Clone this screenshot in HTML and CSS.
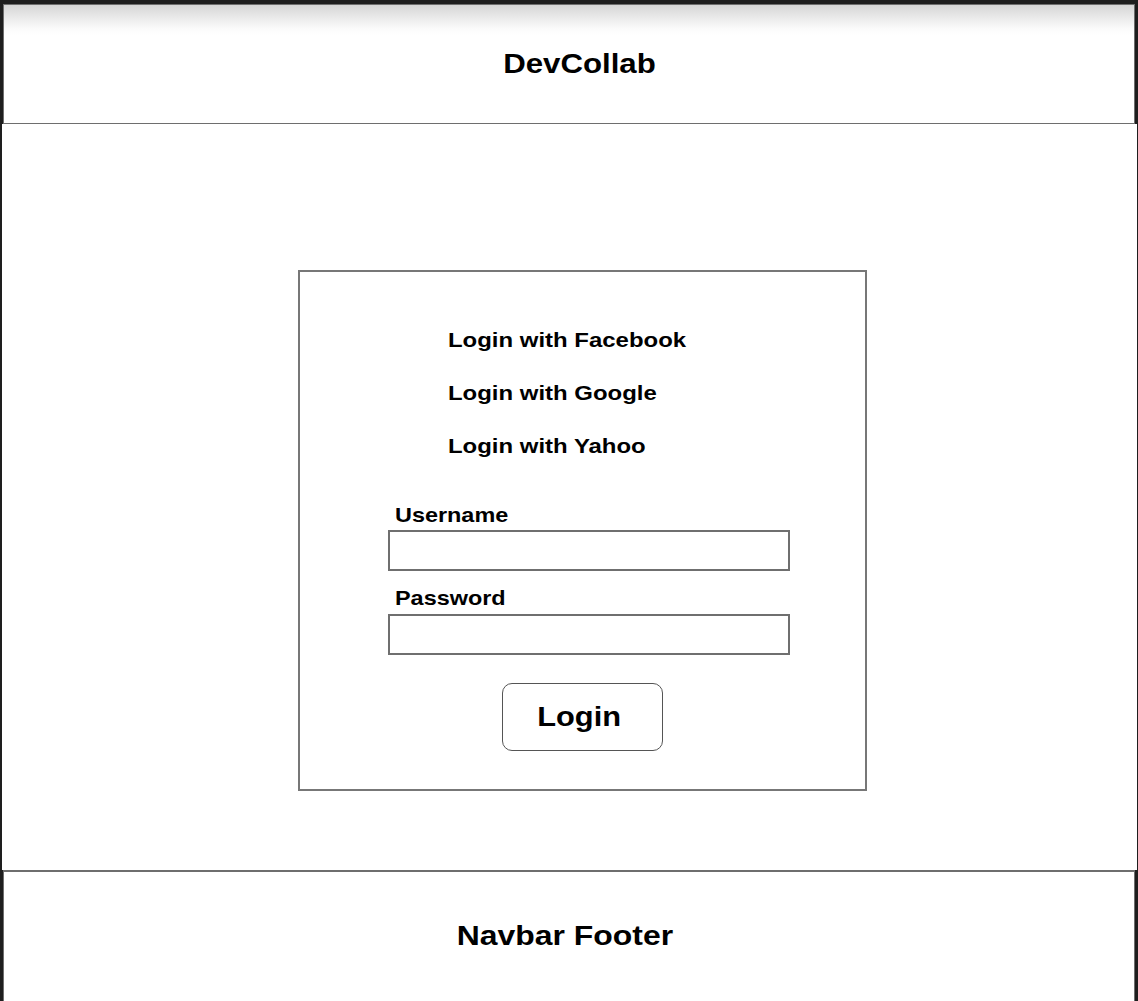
FILE: index.html
```html
<!DOCTYPE html>
<html lang="en">
<head>
<meta charset="utf-8">
<title>DevCollab</title>
<link rel="stylesheet" href="styles.css">
</head>
<body>
  <header class="topbar">
    <h1 class="brand"><span class="wide wide-c">DevCollab</span></h1>
  </header>
  <main class="main">
    <section class="login-box">
      <ul class="social">
        <li><span class="wide wide-l wide-x">Login with Facebook</span></li>
        <li><span class="wide wide-l wide-x">Login with Google</span></li>
        <li><span class="wide wide-l wide-x">Login with Yahoo</span></li>
      </ul>
      <form class="form">
        <label class="label" for="user"><span class="wide wide-l">Username</span></label>
        <input class="field" id="user" type="text">
        <label class="label label-pass" for="pass"><span class="wide wide-l">Password</span></label>
        <input class="field" id="pass" type="password">
        <button class="btn" type="button"><span class="wide wide-c btn-text">Login</span></button>
      </form>
    </section>
  </main>
  <footer class="footer">
    <p class="footer-title"><span class="wide wide-c wide-x">Navbar Footer</span></p>
  </footer>
</body>
</html>
```

FILE: styles.css
```css
html, body {
  margin: 0;
  padding: 0;
}
body {
  background: #1e1e1e;
  font-family: "Liberation Sans", Arial, sans-serif;
  color: #000;
  overflow: hidden;
}
.wide {
  display: inline-block;
  transform: scaleX(1.115);
}
.wide-x {
  transform: scaleX(1.14);
}
.wide-l {
  transform-origin: left center;
}
.wide-c {
  transform-origin: center center;
}
.topbar {
  margin: 4px 3px 0 3px;
  height: 120px;
  box-sizing: border-box;
  border: 1px solid #6e6e6e;
  background: linear-gradient(#d6d6d6 0, #ececec 14px, #fbfbfb 24px, #ffffff 30px);
  display: flex;
  align-items: center;
  justify-content: center;
  padding-left: 21px;
}
.brand {
  margin: 0;
  font-size: 28px;
  line-height: 32px;
  font-weight: 700;
}
.main {
  margin: 0 1px 0 2px;
  height: 746px;
  background: #fff;
  padding-top: 146px;
  box-sizing: border-box;
}
.login-box {
  margin-left: 296px;
  width: 569px;
  height: 521px;
  box-sizing: border-box;
  border: 2px solid #777;
  padding: 56px 0 0 0;
}
.social {
  list-style: none;
  margin: 0;
  padding: 0 0 0 148px;
  display: flex;
  flex-direction: column;
  gap: 29px;
}
.social li {
  font-size: 21px;
  line-height: 24px;
  font-weight: 700;
}
.form {
  margin-top: 45px;
  display: flex;
  flex-direction: column;
  align-items: flex-start;
}
.label {
  font-size: 21px;
  line-height: 24px;
  font-weight: 700;
  margin-left: 95px;
}
.label-pass {
  margin-top: 15px;
}
.field {
  margin: 3px 0 0 88px;
  width: 402px;
  height: 41px;
  box-sizing: border-box;
  border: 2px solid #6f6f6f;
  background: #fff;
  padding: 0;
  outline: none;
}
.label-pass + .field {
  margin-top: 4px;
}
.btn {
  margin: 28px 0 0 202px;
  width: 161px;
  height: 68px;
  box-sizing: border-box;
  border: 1.5px solid #555;
  border-radius: 10px;
  background: #fff;
  font-family: "Liberation Sans", Arial, sans-serif;
  font-size: 28px;
  font-weight: 700;
  color: #000;
  padding: 0 6px 0 0;
  cursor: pointer;
}
.btn-text {
  transform: scaleX(1.1);
}
.footer {
  margin: 0 3px;
  height: 140px;
  box-sizing: border-box;
  border: 1px solid #6e6e6e;
  border-top-width: 2px;
  background: #fff;
  padding-top: 48px;
  padding-right: 9px;
  text-align: center;
}
.footer-title {
  margin: 0;
  font-size: 28px;
  line-height: 32px;
  font-weight: 700;
}
```
